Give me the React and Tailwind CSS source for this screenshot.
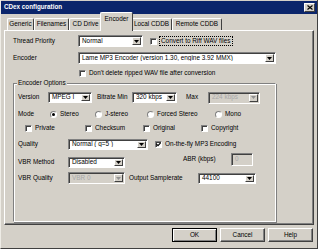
import React from 'react';

const FONT = "font-['Liberation_Sans',Arial,sans-serif]";

function Arrow({ disabled }) {
  return (
    <div className="flex h-full w-[9px] shrink-0 items-center justify-center border border-t-white border-l-white border-r-[#404040] border-b-[#404040] bg-[#d4d0c8]">
      <svg width="5" height="3" viewBox="0 0 5 3">
        <path d="M0 0h5L2.5 3z" fill={disabled ? '#909090' : '#000'} />
      </svg>
    </div>
  );
}

function Select({ className, value, disabled }) {
  return (
    <div
      className={`flex shrink-0 items-center border border-t-[#808080] border-l-[#808080] border-r-white border-b-white p-[1px] shadow-[inset_1px_1px_0_#404040] ${
        disabled ? 'bg-[#d4d0c8]' : 'bg-white'
      } ${className}`}
    >
      <span className={`flex-1 truncate pl-[2px] ${disabled ? 'text-[#a8a8a8]' : 'text-black'}`}>{value}</span>
      <Arrow disabled={disabled} />
    </div>
  );
}

function Check({ checked }) {
  return (
    <div className="flex h-[7px] w-[7px] shrink-0 items-center justify-center border border-t-[#808080] border-l-[#808080] border-r-white border-b-white bg-white shadow-[inset_1px_1px_0_#404040]">
      {checked && (
        <svg width="5" height="5" viewBox="0 0 5 5">
          <path d="M0.5 2.2L2 3.7L4.6 0.8" stroke="#000" strokeWidth="1.2" fill="none" />
        </svg>
      )}
    </div>
  );
}

function Radio({ checked }) {
  return (
    <div className="flex h-[7px] w-[7px] shrink-0 items-center justify-center rounded-full border border-t-[#808080] border-l-[#808080] border-r-white border-b-white bg-white">
      {checked && <div className="h-[3px] w-[3px] rounded-full bg-black" />}
    </div>
  );
}

function Button({ label, primary }) {
  return (
    <div
      className={`flex h-[14px] w-[45px] items-center justify-center bg-[#d4d0c8] ${
        primary
          ? 'border border-black shadow-[inset_1px_1px_0_#fff,inset_-1px_-1px_0_#808080]'
          : 'border border-t-white border-l-white border-r-[#404040] border-b-[#404040] shadow-[inset_-1px_-1px_0_#808080]'
      }`}
    >
      {label}
    </div>
  );
}

const tabs = [
  { label: 'Generic', w: 'w-[27px]' },
  { label: 'Filenames', w: 'w-[35px]' },
  { label: 'CD Drive', w: 'w-[33px]' },
  { label: 'Encoder', w: 'w-[31px]', active: true },
  { label: 'Local CDDB', w: 'w-[41px]' },
  { label: 'Remote CDDB', w: 'w-[50px]' },
];

export default function App() {
  return (
    <div
      className={`${FONT} flex h-[249px] w-[318px] flex-col overflow-hidden border-l border-r border-b border-l-[#eeece6] border-r-[#404040] border-b-[#404040] bg-[#d4d0c8] text-[6.4px] leading-none text-black`}
    >
      {/* Title bar */}
      <div className="mt-[1px] flex h-[13px] items-center justify-between bg-[#0b256b] pl-[3px] pr-[2px]">
        <span className="text-[6.3px] font-bold text-white">CDex configuration</span>
        <div className="flex h-[9px] w-[11px] items-center justify-center border border-t-white border-l-white border-r-[#404040] border-b-[#404040] bg-[#d4d0c8]">
          <svg width="6" height="5" viewBox="0 0 6 5">
            <path d="M0.5 0.5L5.5 4.5M5.5 0.5L0.5 4.5" stroke="#000" strokeWidth="1.2" />
          </svg>
        </div>
      </div>

      {/* Tabs */}
      <div className="ml-[6px] mt-[3px] flex h-[13px] items-end">
        {tabs.map((t) =>
          t.active ? (
            <div
              key={t.label}
              className={`relative z-10 -mx-[2px] mb-[-1px] box-content flex h-[15px] items-start justify-center rounded-t-[2px] border border-b-0 border-t-white border-l-white border-r-[#404040] bg-[#d4d0c8] pt-[3px] ${t.w}`}
            >
              {t.label}
            </div>
          ) : (
            <div
              key={t.label}
              className={`flex h-[12px] items-center justify-center rounded-t-[2px] border border-b-0 border-t-white border-l-white border-r-[#404040] bg-[#d4d0c8] ${t.w}`}
            >
              {t.label}
            </div>
          )
        )}
      </div>

      {/* Panel */}
      <div className="ml-[3px] flex h-[195px] w-[310px] flex-col border border-t-white border-l-white border-r-[#404040] border-b-[#404040] pl-[8px] pt-[4px] shadow-[inset_-1px_-1px_0_#808080]">
        {/* Thread priority */}
        <div className="flex h-[12px] items-center">
          <span className="w-[65px]">Thread Priority</span>
          <Select className="h-[12px] w-[65px]" value="Normal" />
          <div className="ml-[7px]">
            <Check />
          </div>
          <span className="ml-[2px] border border-dotted border-black p-[1px]">Convert to Riff WAV files</span>
        </div>

        {/* Encoder */}
        <div className="mt-[5px] flex h-[12px] items-center">
          <span className="w-[65px]">Encoder</span>
          <Select className="h-[12px] w-[198px]" value="Lame MP3 Encoder (version 1.30, engine 3.92 MMX)" />
        </div>

        <div className="mt-[4px] flex h-[10px] items-center pl-[66px]">
          <Check />
          <span className="ml-[3px]">Don&apos;t delete ripped WAV file after conversion</span>
        </div>

        {/* Encoder options group */}
        <div className="relative mt-[5px] flex h-[139px] w-[263px] flex-col border border-t-[#808080] border-l-[#808080] border-r-white border-b-white pl-[4px] pt-[8px] shadow-[inset_1px_1px_0_#fff,1px_1px_0_#808080]">
          <span className="absolute left-[3px] top-[-4px] bg-[#d4d0c8] px-[1px]">Encoder Options</span>

          <div className="flex h-[11px] items-center">
            <span className="w-[30px]">Version</span>
            <Select className="h-[11px] w-[44px]" value="MPEG I" />
            <span className="ml-[5px] w-[35px]">Bitrate Min</span>
            <Select className="h-[11px] w-[45px]" value="320 kbps" />
            <span className="ml-[9px] w-[22px]">Max</span>
            <Select className="h-[12px] w-[52px]" value="224 kbps" disabled />
          </div>

          <div className="mt-[6px] flex h-[10px] items-center">
            <span className="w-[32px]">Mode</span>
            <div className="flex w-[45px] items-center">
              <Radio checked />
              <span className="ml-[3px]">Stereo</span>
            </div>
            <div className="flex w-[52px] items-center">
              <Radio />
              <span className="ml-[3px]">J-stereo</span>
            </div>
            <div className="flex w-[68px] items-center">
              <Radio />
              <span className="ml-[3px]">Forced Stereo</span>
            </div>
            <div className="flex items-center">
              <Radio />
              <span className="ml-[3px]">Mono</span>
            </div>
          </div>

          <div className="mt-[4px] flex h-[10px] items-center pl-[7px]">
            <div className="flex w-[60px] items-center">
              <Check />
              <span className="ml-[3px]">Private</span>
            </div>
            <div className="flex w-[58px] items-center">
              <Check />
              <span className="ml-[3px]">Checksum</span>
            </div>
            <div className="flex w-[58px] items-center">
              <Check />
              <span className="ml-[3px]">Original</span>
            </div>
            <div className="flex items-center">
              <Check />
              <span className="ml-[3px]">Copyright</span>
            </div>
          </div>

          <div className="mt-[5px] flex h-[12px] items-center">
            <span className="w-[50px]">Quality</span>
            <Select className="h-[11px] w-[80px]" value="Normal ( q=5 )" />
            <div className="ml-[7px]">
              <Check checked />
            </div>
            <span className="ml-[3px]">On-the-fly MP3 Encoding</span>
          </div>

          <div className="mt-[3px] flex h-[15px] items-start">
            <div className="mt-[4px] flex h-[11px] items-center">
              <span className="w-[50px]">VBR Method</span>
              <Select className="h-[11px] w-[57px]" value="Disabled" />
            </div>
            <div className="flex h-[13px] items-center">
              <span className="ml-[58px] w-[48px]">ABR (kbps)</span>
              <div className="flex h-[13px] w-[22px] items-center border border-t-[#808080] border-l-[#808080] border-r-white border-b-white bg-[#d4d0c8] pl-[3px] text-[#a8a8a8] shadow-[inset_1px_1px_0_#404040]">
                0
              </div>
            </div>
          </div>

          <div className="mt-[4px] flex h-[12px] items-center">
            <span className="w-[50px]">VBR Quality</span>
            <Select className="h-[12px] w-[57px]" value="VBR 0" disabled />
            <span className="ml-[4px] w-[69px]">Output Samplerate</span>
            <Select className="h-[11px] w-[58px]" value="44100" />
          </div>
        </div>
      </div>

      {/* Buttons */}
      <div className="mt-[3px] flex justify-end gap-[3px] pr-[4px]">
        <Button label="OK" primary />
        <Button label="Cancel" />
        <Button label="Help" />
      </div>
    </div>
  );
}
